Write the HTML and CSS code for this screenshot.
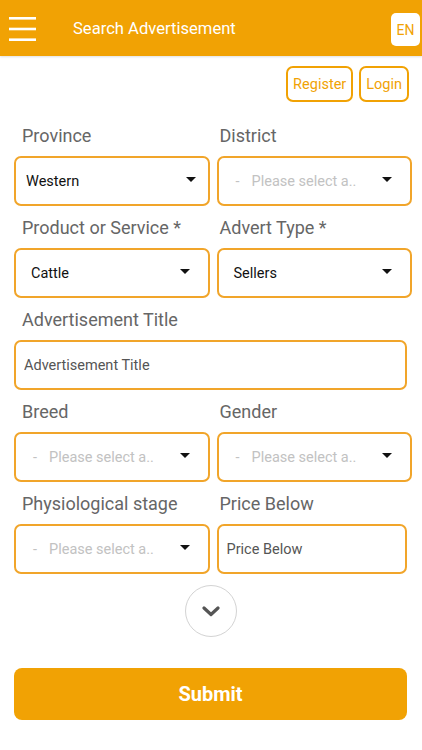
FILE: index.html
```html
<!DOCTYPE html>
<html lang="en">

<head>
  <meta charset="UTF-8">
  <meta name="viewport" content="width=device-width, initial-scale=1.0">
  <title>Search Advertisement</title>
  <link rel="stylesheet" href="styles.css">
</head>

<body>
  <header class="topbar">
    <svg class="menu-icon" width="27" height="24" viewBox="0 0 27 24">
      <rect x="0" y="0" width="27" height="2.6" fill="#fff"/>
      <rect x="0" y="10.7" width="27" height="2.6" fill="#fff"/>
      <rect x="0" y="21.4" width="27" height="2.6" fill="#fff"/>
    </svg>
    <span class="topbar-title">Search Advertisement</span>
    <span class="lang">EN</span>
  </header>

  <div class="account">
    <button class="outline-btn">Register</button>
    <button class="outline-btn">Login</button>
  </div>

  <form class="search-form">
    <div class="field">
      <label>Province</label>
      <div class="select select-tight"><span>Western</span><i class="caret"></i></div>
    </div>
    <div class="field right">
      <label>District</label>
      <div class="select placeholder"><span><b>-</b>Please select a..</span><i class="caret"></i></div>
    </div>

    <div class="field">
      <label>Product or Service *</label>
      <div class="select"><span>Cattle</span><i class="caret"></i></div>
    </div>
    <div class="field right">
      <label>Advert Type *</label>
      <div class="select"><span>Sellers</span><i class="caret"></i></div>
    </div>

    <div class="field wide">
      <label>Advertisement Title</label>
      <input type="text" placeholder="Advertisement Title">
    </div>

    <div class="field">
      <label>Breed</label>
      <div class="select placeholder"><span><b>-</b>Please select a..</span><i class="caret"></i></div>
    </div>
    <div class="field right">
      <label>Gender</label>
      <div class="select placeholder"><span><b>-</b>Please select a..</span><i class="caret"></i></div>
    </div>

    <div class="field">
      <label>Physiological stage</label>
      <div class="select placeholder"><span><b>-</b>Please select a..</span><i class="caret"></i></div>
    </div>
    <div class="field right">
      <label>Price Below</label>
      <input type="text" placeholder="Price Below">
    </div>

    <div class="more wide">
      <span class="more-btn">
        <svg width="18" height="11" viewBox="0 0 18 11">
          <path d="M2 2 L9 8.5 L16 2" fill="none" stroke="#555" stroke-width="3.2" stroke-linecap="round" stroke-linejoin="round"/>
        </svg>
      </span>
    </div>

    <button type="button" class="submit wide">Submit</button>
  </form>
</body>

</html>
```
FILE: styles.css
```css
/* Page */
body {
  margin: 0;
  font-family: Roboto, "Liberation Sans", Arial, sans-serif;
  background-color: #fff;
}

/* Orange title bar */
.topbar {
  height: 56px;
  display: flex;
  align-items: center;
  padding: 0 2px 0 9px;
  background-color: #f1a204;
  box-shadow: 0 1px 2px rgba(0, 0, 0, 0.12);
}

.menu-icon {
  margin-top: 1px;
}

.topbar-title {
  flex: 1;
  margin-left: 37px;
  color: #fff;
  font-size: 16.6px;
}

.lang {
  width: 29px;
  height: 33px;
  margin-top: 3px;
  display: flex;
  align-items: center;
  justify-content: center;
  border-radius: 5px;
  background-color: #fff;
  color: #f1a204;
  font-size: 14px;
}

/* Register / Login */
.account {
  display: flex;
  justify-content: flex-end;
  gap: 6px;
  padding: 10px 13px 0 0;
}

.outline-btn {
  height: 36px;
  padding: 0 5px;
  border: 2px solid #f1a204;
  border-radius: 7px;
  background-color: #fff;
  color: #f1a204;
  font-family: inherit;
  font-size: 14.5px;
}

/* Search form */
.search-form {
  display: grid;
  grid-template-columns: 1fr 1fr;
  column-gap: 7px;
  padding: 12px 10px 0 14px;
}

.field {
  display: flex;
  flex-direction: column;
}

.wide {
  grid-column: 1 / 3;
}

.field label {
  height: 22px;
  line-height: 22px;
  margin: 11px 0 9px 8px;
  color: #666;
  font-size: 18px;
}

.field.right label {
  margin-left: 3px;
}

.select, .field input {
  box-sizing: border-box;
  height: 50px;
  border: 2px solid #f1a52a;
  border-radius: 7px;
  font-family: inherit;
  font-size: 14.5px;
}

.select {
  display: flex;
  align-items: center;
  justify-content: space-between;
  padding: 0 18px 0 15px;
  color: #111;
}

.select-tight {
  padding: 0 12px 0 10px;
}

.placeholder {
  color: #c2c2c2;
}

.placeholder b {
  font-weight: normal;
  margin: 0 12px 0 2px;
}

.caret {
  width: 0;
  height: 0;
  margin-top: -3px;
  border-left: 5px solid transparent;
  border-right: 5px solid transparent;
  border-top: 5px solid #111;
}

.field input {
  width: calc(100% - 5px);
  padding: 0 8px;
  color: #555;
  outline: none;
}

.field input::placeholder {
  color: #555;
}

/* Expand button */
.more {
  display: flex;
  justify-content: center;
  padding: 11px 4px 0 0;
}

.more-btn {
  width: 50px;
  height: 50px;
  display: flex;
  align-items: center;
  justify-content: center;
  border: 1px solid #d3d3d3;
  border-radius: 50%;
}

.more-btn svg {
  margin-top: 1px;
}

/* Submit */
.submit {
  width: calc(100% - 5px);
  height: 52px;
  margin-top: 31px;
  border: none;
  border-radius: 8px;
  background-color: #f1a204;
  color: #fff;
  font-family: inherit;
  font-size: 20px;
  font-weight: bold;
}
```
